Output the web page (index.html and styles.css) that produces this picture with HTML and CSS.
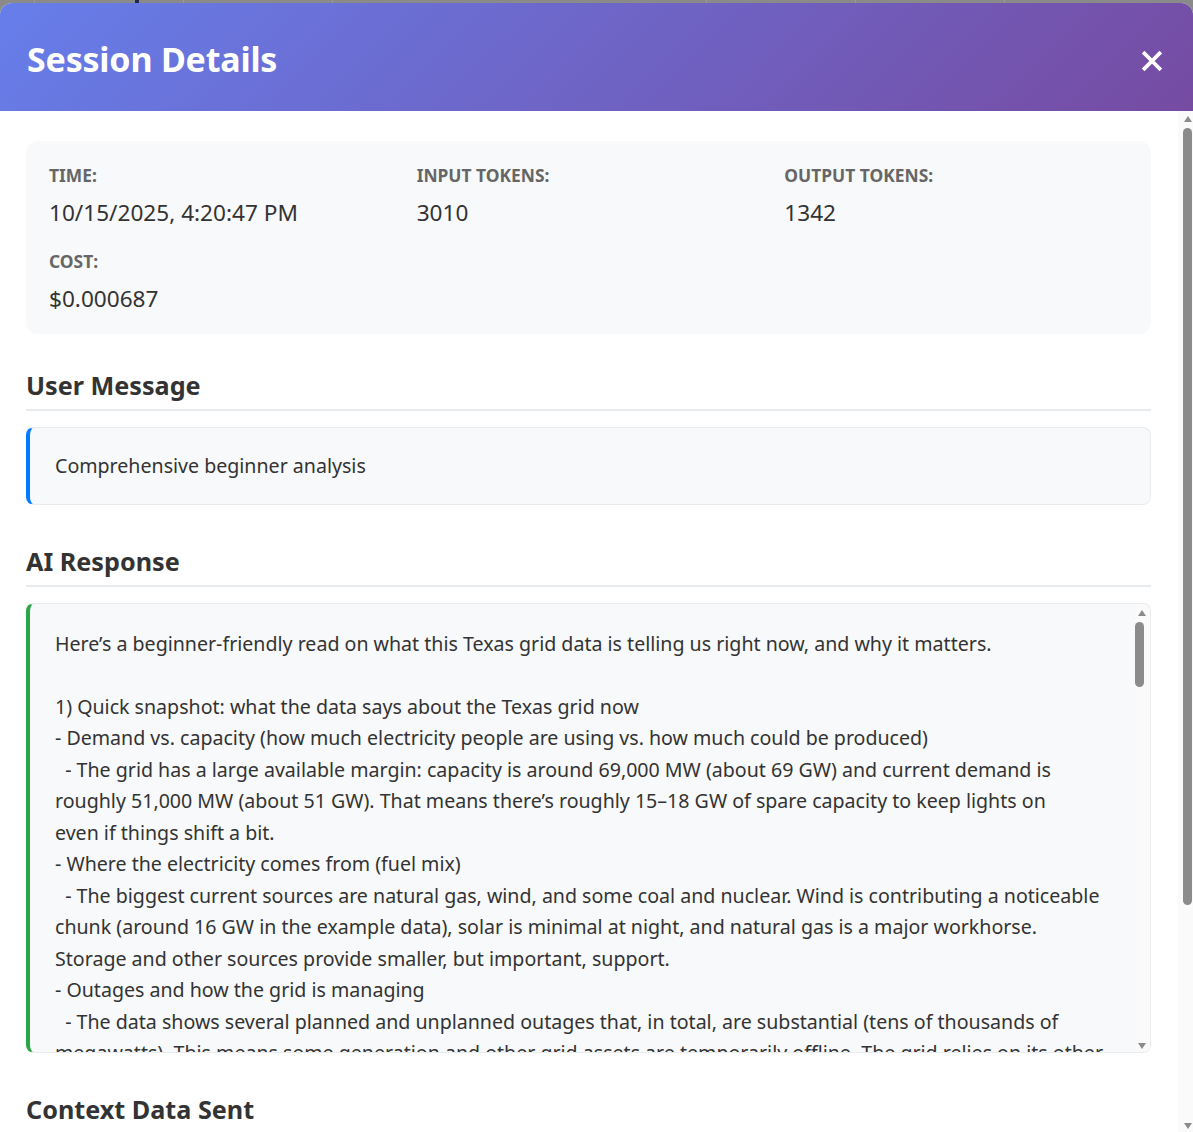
FILE: index.html
```html
<!DOCTYPE html>
<html lang="en">
<head>
<meta charset="utf-8">
<title>Session Details</title>
<link rel="stylesheet" href="styles.css">
</head>
<body>
<div class="backdrop">
  <div class="backdrop-row"><span class="bc w35"></span><span class="bc w149 mark"></span><span class="bc w149"></span><span class="bc w374"></span><span class="bc w149"></span><span class="bc w149"></span><span class="bc wrest"></span></div>
  <div class="modal">
    <header class="modal-header">
      <h2 class="modal-title">Session Details</h2>
      <button class="close-btn" aria-label="Close">
        <svg width="22" height="22" viewBox="0 0 22 22"><path d="M3.5 3.5 L18.5 18.5 M18.5 3.5 L3.5 18.5" stroke="#fff" stroke-width="3.8" stroke-linecap="square" fill="none"/></svg>
      </button>
    </header>
    <div class="modal-main">
      <div class="modal-body">
        <div class="info-grid">
          <div class="info-item"><div class="info-label">Time:</div><div class="info-value">10/15/2025, 4:20:47 PM</div></div>
          <div class="info-item"><div class="info-label">Input Tokens:</div><div class="info-value">3010</div></div>
          <div class="info-item"><div class="info-label">Output Tokens:</div><div class="info-value">1342</div></div>
          <div class="info-item"><div class="info-label">Cost:</div><div class="info-value">$0.000687</div></div>
        </div>

        <section class="section">
          <h3 class="section-title">User Message</h3>
          <div class="message-box user-box">Comprehensive beginner analysis</div>
        </section>

        <section class="section">
          <h3 class="section-title">AI Response</h3>
          <div class="message-box ai-box">
            <div class="ai-text">Here’s a beginner-friendly read on what this Texas grid data is telling us right now, and why it matters.

1) Quick snapshot: what the data says about the Texas grid now
- Demand vs. capacity (how much electricity people are using vs. how much could be produced)
  - The grid has a large available margin: capacity is around 69,000 MW (about 69 GW) and current demand is roughly 51,000 MW (about 51 GW). That means there’s roughly 15–18 GW of spare capacity to keep lights on<br>even if things shift a bit.
- Where the electricity comes from (fuel mix)
  - The biggest current sources are natural gas, wind, and some coal and nuclear. Wind is contributing a noticeable chunk (around 16 GW in the example data), solar is minimal at night, and natural gas is a major workhorse. Storage and other sources provide smaller, but important, support.
- Outages and how the grid is managing
  - The data shows several planned and unplanned outages that, in total, are substantial (tens of thousands of megawatts). This means some generation and other grid assets are temporarily offline. The grid relies on its other resources and reserves to cover the gap, and so far it is doing that comfortably.</div>
            <div class="vscroll mini">
              <span class="arrow up"></span>
              <div class="track"><div class="thumb mini-thumb"></div></div>
              <span class="arrow down"></span>
            </div>
          </div>
        </section>

        <section class="section last">
          <h3 class="section-title">Context Data Sent</h3>
        </section>
      </div>
      <div class="vscroll main">
        <span class="arrow up"></span>
        <div class="track"><div class="thumb main-thumb"></div></div>
        <span class="arrow down"></span>
      </div>
    </div>
  </div>
</div>
</body>
</html>
```

FILE: styles.css
```css
* { box-sizing: border-box; }

html, body {
  margin: 0;
  height: 100%;
  overflow: hidden;
}

body {
  font-family: "Noto Sans", "Open Sans", "DejaVu Sans", sans-serif;
  color: #333;
  background: #8a8a8a;
}

.backdrop {
  height: 100vh;
  display: flex;
  flex-direction: column;
  position: relative;
}

.backdrop-row {
  position: absolute;
  top: 0;
  left: 0;
  right: 0;
  height: 6px;
  display: flex;
}

.bc {
  height: 100%;
  border-right: 1px solid #9a9a9a;
  flex: none;
}
.w35 { width: 35px; }
.w149 { width: 149px; }
.w374 { width: 374px; }
.wrest { flex: 1; border-right: 0; }
.mark { position: relative; }
.mark::after {
  content: "";
  position: absolute;
  left: 100px;
  top: 0;
  width: 4px;
  height: 3px;
  background: #1e2a55;
}

.modal {
  position: relative;
  margin-top: 3px;
  flex: 1;
  min-height: 0;
  display: flex;
  flex-direction: column;
  background: #fff;
  border-radius: 12px 12px 0 0;
  overflow: hidden;
}

.modal-header {
  flex: none;
  height: 108px;
  display: flex;
  align-items: center;
  justify-content: space-between;
  padding: 0 30px 0 27px;
  background: linear-gradient(135deg, #667eea 0%, #764ba2 100%);
  color: #fff;
}

.modal-title {
  margin: 4px 0 0;
  font-size: 34px;
  font-weight: 700;
  line-height: 1.2;
  letter-spacing: -0.2px;
}

.close-btn {
  background: none;
  border: 0;
  padding: 0;
  width: 22px;
  height: 22px;
  cursor: pointer;
  display: flex;
  margin-top: 8px;
}

.modal-main {
  flex: 1;
  min-height: 0;
  display: flex;
}

.modal-body {
  flex: 1;
  min-width: 0;
  overflow: hidden;
  padding: 30px 27px 30px 26px;
  background: #fff;
}

/* Fake scrollbars (headless browser hides native ones) */
.vscroll {
  flex: none;
  width: 15px;
  display: flex;
  flex-direction: column;
  align-items: center;
  background: #fafafa;
}
.vscroll .track {
  flex: 1;
  width: 100%;
  display: flex;
  flex-direction: column;
}
.arrow {
  flex: none;
  width: 0;
  height: 0;
  border-left: 4.5px solid transparent;
  border-right: 4.5px solid transparent;
}
.arrow.up { border-bottom: 6px solid #8b8b8b; }
.arrow.down { border-top: 6px solid #8b8b8b; }

.thumb {
  background: #8b8b8b;
  border-radius: 5px;
  width: 9px;
}

.vscroll.main { padding: 5px 0 3px 5px; }
.vscroll.main .arrow.up { margin-bottom: 6px; }
.main-thumb { height: 777px; }

.vscroll.mini {
  background: #fafafa;
  padding: 6px 1px 3px 0;
}
.vscroll.mini .arrow.up { margin-bottom: 6px; }
.mini-thumb { height: 65px; }

.info-grid {
  display: grid;
  grid-template-columns: repeat(3, 1fr);
  column-gap: 24px;
  row-gap: 20px;
  padding: 22px 23px 19px;
  background: #f8f9fa;
  border-radius: 12px;
  margin-bottom: 34px;
}

.info-label {
  font-size: 17.4px;
  font-weight: 700;
  color: #666;
  text-transform: uppercase;
  line-height: 24px;
  margin-bottom: 10px;
}

.info-value {
  font-size: 22.6px;
  line-height: 32px;
  color: #333;
}

.section { margin-bottom: 39px; }
.section.last { margin-bottom: 0; }

.section-title {
  margin: 0 0 16px;
  font-size: 25.2px;
  font-weight: 700;
  line-height: 34px;
  padding-bottom: 7px;
  border-bottom: 2px solid #e9ecef;
  color: #333;
}

.message-box {
  background: #f8f9fa;
  border: 1px solid #e9ecef;
  border-radius: 8px;
  font-size: 19.6px;
  line-height: 31.5px;
  color: #333;
}

.user-box {
  border-left: 4px solid #007bff;
  padding: 22px 24px 22px 25px;
}

.ai-box {
  border-left: 4px solid #28a745;
  height: 450px;
  overflow: hidden;
  display: flex;
}

.ai-text {
  flex: 1;
  min-width: 0;
  padding: 24px 24px 0 25px;
  white-space: pre-wrap;
  overflow: hidden;
}
```
